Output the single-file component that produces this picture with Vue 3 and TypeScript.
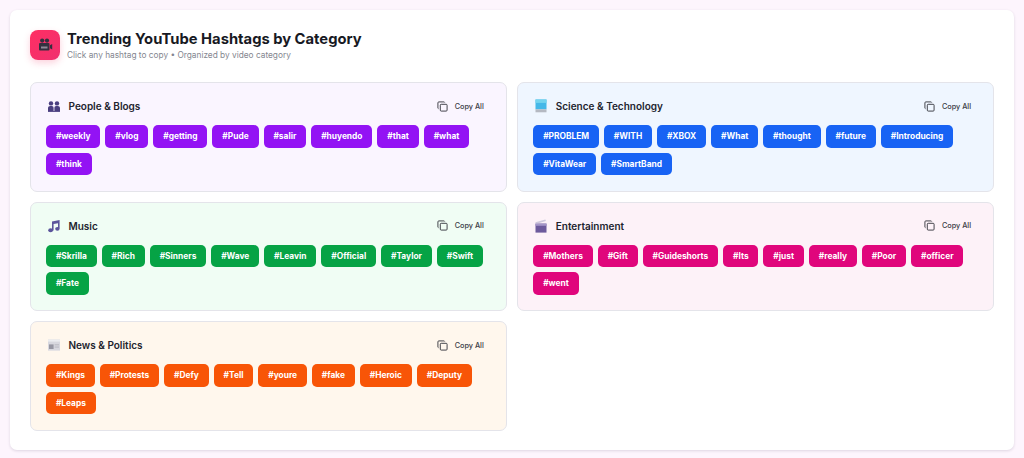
<script setup lang="ts">
interface Category {
  name: string
  icon: string
  tone: string
  tags: string[]
}

const categories: Category[] = [
  { name: 'People & Blogs', icon: 'people', tone: 'purple', tags: ['weekly', 'vlog', 'getting', 'Pude', 'salir', 'huyendo', 'that', 'what', 'think'] },
  { name: 'Science & Technology', icon: 'laptop', tone: 'blue', tags: ['PROBLEM', 'WITH', 'XBOX', 'What', 'thought', 'future', 'Introducing', 'VitaWear', 'SmartBand'] },
  { name: 'Music', icon: 'music', tone: 'green', tags: ['Skrilla', 'Rich', 'Sinners', 'Wave', 'Leavin', 'Official', 'Taylor', 'Swift', 'Fate'] },
  { name: 'Entertainment', icon: 'clapper', tone: 'pink', tags: ['Mothers', 'Gift', 'Guideshorts', 'Its', 'just', 'really', 'Poor', 'officer', 'went'] },
  { name: 'News & Politics', icon: 'news', tone: 'orange', tags: ['Kings', 'Protests', 'Defy', 'Tell', 'youre', 'fake', 'Heroic', 'Deputy', 'Leaps'] },
]
</script>

<template>
  <div class="page">
    <main class="panel">
      <header class="head">
        <div class="logo">
          <svg viewBox="0 0 16 16" width="16" height="16">
            <circle cx="5.2" cy="3.6" r="2.1" fill="#33303f" />
            <circle cx="10" cy="3.6" r="2.1" fill="#33303f" />
            <rect x="2" y="6" width="10.5" height="7.5" rx="1" fill="#33303f" />
            <rect x="4" y="9.5" width="6.5" height="2" fill="#8f8a98" />
            <path d="M13 8.2 15.2 7v5.5L13 11.3z" fill="#33303f" />
          </svg>
        </div>
        <div>
          <h1>Trending YouTube Hashtags by Category</h1>
          <p>Click any hashtag to copy • Organized by video category</p>
        </div>
      </header>

      <section class="grid">
        <article v-for="cat in categories" :key="cat.name" class="card" :class="cat.tone">
          <div class="card-head">
            <div class="card-title">
              <svg class="emoji" viewBox="0 0 14 14" width="14" height="14">
                <template v-if="cat.icon === 'people'">
                  <circle cx="4" cy="4.4" r="2.2" fill="#4a3f80" />
                  <circle cx="10" cy="4.4" r="2.2" fill="#4a3f80" />
                  <path d="M1 12V9.2C1 7.8 2 7 3.2 7h1.6C6 7 6.6 7.8 6.6 9.2V12zM7.4 12V9.2C7.4 7.8 8 7 9.2 7h1.6C12 7 13 7.8 13 9.2V12z" fill="#4a3f80" />
                  <rect x="1" y="12" width="12" height="0.9" fill="#4a3f80" />
                </template>
                <template v-else-if="cat.icon === 'laptop'">
                  <rect x="1.5" y="0.5" width="11" height="9.8" fill="#45b8e8" />
                  <rect x="1.5" y="0.5" width="11" height="3.4" fill="#74d4ee" />
                  <rect x="1.5" y="10.3" width="11" height="3" fill="#b5b9c2" />
                </template>
                <template v-else-if="cat.icon === 'music'">
                  <path d="M5 2.6 12.6 1v8.6h-1.6V4.2L6.6 5.1v6.3H5z" fill="#5b559c" />
                  <ellipse cx="3.6" cy="11.3" rx="2.4" ry="2" fill="#5b559c" />
                  <ellipse cx="10.4" cy="9.8" rx="2.2" ry="1.9" fill="#5b559c" />
                </template>
                <template v-else-if="cat.icon === 'clapper'">
                  <rect x="1.5" y="4.6" width="11" height="9" fill="#6d5a9c" />
                  <path d="M1.4 3.2 11.4 0.4l.5 1.7L1.9 4.9z" fill="#cfc8dc" />
                  <rect x="1.5" y="4.6" width="11" height="2.2" fill="#a596c8" />
                </template>
                <template v-else>
                  <rect x="1" y="1.6" width="12" height="11" fill="#d8d8df" />
                  <rect x="1" y="1.6" width="12" height="2" fill="#ecedf1" />
                  <rect x="2" y="6.4" width="4.6" height="4.6" fill="#9696a2" />
                  <rect x="7.6" y="6.4" width="4.4" height="0.9" fill="#b4b4bd" />
                  <rect x="7.6" y="8.6" width="4.4" height="0.9" fill="#b4b4bd" />
                </template>
              </svg>
              <h2>{{ cat.name }}</h2>
            </div>
            <button class="copy-all" type="button">
              <svg viewBox="0 0 12 12" width="11" height="11" fill="none" stroke="#33343c" stroke-width="1" stroke-linejoin="round">
                <rect x="3.6" y="3.6" width="7.4" height="7.4" rx="1" />
                <path d="M8.4 1.6A1 1 0 0 0 7.6 1H2a1 1 0 0 0-1 1v5.6c0 .4.2.7.6.8" />
              </svg>
              <span>Copy All</span>
            </button>
          </div>
          <div class="tags">
            <button v-for="tag in cat.tags" :key="tag" class="tag" type="button">#{{ tag }}</button>
          </div>
        </article>
      </section>
    </main>
  </div>
</template>

<style>
html, body { margin: 0; background: #fdf5fd; }
</style>

<style scoped>
.page {
  height: 458px;
  box-sizing: border-box;
  padding: 10px;
  font-family: Inter, "Liberation Sans", sans-serif;
  color: #1a1c26;
}
.panel {
  height: 440px;
  box-sizing: border-box;
  padding: 20px;
  background: #fff;
  border-radius: 7px;
  box-shadow: 0 1px 3px rgba(30, 20, 60, 0.14);
}
.head { display: flex; align-items: center; gap: 7px; height: 30px; margin-bottom: 22px; }
.logo {
  width: 30px; height: 30px;
  border-radius: 8px;
  background: linear-gradient(135deg, #ff2e63, #f0316f);
  box-shadow: 0 3px 7px rgba(240, 50, 100, 0.22);
  display: flex; align-items: center; justify-content: center;
}
h1 { margin: 0; font-size: 14.75px; line-height: 18px; font-weight: 700; color: #171923; }
.head p { margin: 2px 0 0; font-size: 8.3px; line-height: 11px; color: #84868f; }
.grid { display: grid; grid-template-columns: 1fr 1fr; gap: 10px 10.5px; }
.card {
  height: 109.5px;
  box-sizing: border-box;
  padding: 14.5px 15px;
  border: 1px solid #e4e4ea;
  border-radius: 7px;
}
.card-head { display: flex; align-items: center; justify-content: space-between; height: 17px; margin-bottom: 10.5px; padding-right: 7px; }
.card-title { display: flex; align-items: center; }
.emoji { margin-right: 7.5px; margin-left: 1px; }
h2 { margin: 0; font-size: 10px; font-weight: 600; color: #22242e; }
.copy-all {
  display: flex; align-items: center; gap: 7px;
  padding: 0; border: 0; background: none;
  font: 500 7.3px Inter, "Liberation Sans", sans-serif;
  color: #3a3c46;
}
.tags { display: flex; flex-wrap: wrap; gap: 5px; }
.tag {
  height: 22.5px;
  padding: 0 9.875px;
  border: 0;
  border-radius: 5px;
  color: #fff;
  font: 700 8.4px Inter, "Liberation Sans", sans-serif;
}
.purple { background: #faf5ff; }
.purple .tag { background: #9313f4; }
.blue { background: #eff6ff; }
.blue .tag { background: #1863f4; }
.green { background: #f0fdf4; }
.green .tag { background: #06a345; }
.pink { background: #fdf2f8; }
.pink .tag { background: #e0067c; }
.orange { background: #fff7ed; }
.orange .tag { background: #f85507; }
</style>
